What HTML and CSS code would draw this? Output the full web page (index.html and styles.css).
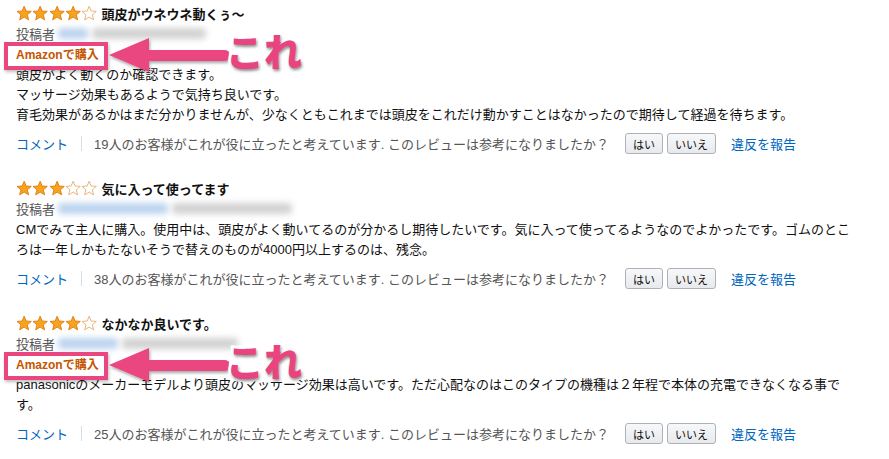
FILE: index.html
```html
<!DOCTYPE html>
<html lang="ja">
<head>
<meta charset="utf-8">
<title>レビュー</title>
<link rel="stylesheet" href="styles.css">
</head>
<body>
<svg class="defs" width="0" height="0" aria-hidden="true">
  <defs>
    <symbol id="star" viewBox="0 0 16 16">
      <path d="M8 1.2 L9.94 5.9 L15 6.3 L11.14 9.6 L12.4 14.6 L8 11.9 L3.6 14.6 L4.86 9.6 L1 6.3 L6.06 5.9 Z"/>
    </symbol>
    <filter id="shadow" x="-20%" y="-40%" width="140%" height="180%">
      <feDropShadow dx="1" dy="2" stdDeviation="1.5" flood-color="#000" flood-opacity="0.35"/>
    </filter>
  </defs>
</svg>

<div class="review">
  <div class="title-row">
    <span class="stars">
      <svg class="star full"><use href="#star"/></svg><svg class="star full"><use href="#star"/></svg><svg class="star full"><use href="#star"/></svg><svg class="star full"><use href="#star"/></svg><svg class="star empty"><use href="#star"/></svg>
    </span>
    <span class="title">頭皮がウネウネ動くぅ〜</span>
  </div>
  <div class="byline">投稿者<span class="blur blue w1"></span><span class="blur gray w2"></span></div>
  <div class="badge-row">
    <span class="badge">Amazonで購入</span>
    <span class="mark-box"></span>
    <svg class="arrow" width="130" height="44" viewBox="0 0 130 44"><g filter="url(#shadow)"><path d="M2 21 L42 4 L42 16 L117 16 Q123 16 123 21.5 Q123 27 117 27 L42 27 L42 38 Z" fill="#ea4781"/></g></svg>
    <span class="kore">これ</span>
  </div>
  <div class="body">頭皮がよく動くのか確認できます。<br>マッサージ効果もあるようで気持ち良いです。<br>育毛効果があるかはまだ分かりませんが、少なくともこれまでは頭皮をこれだけ動かすことはなかったので期待して経過を待ちます。</div>
  <div class="actions">
    <a class="link">コメント</a><span class="sep"></span>
    <span class="helpful">19人のお客様がこれが役に立ったと考えています. このレビューは参考になりましたか？</span>
    <button class="btn">はい</button><button class="btn">いいえ</button>
    <a class="link report">違反を報告</a>
  </div>
</div>

<div class="review">
  <div class="title-row">
    <span class="stars">
      <svg class="star full"><use href="#star"/></svg><svg class="star full"><use href="#star"/></svg><svg class="star full"><use href="#star"/></svg><svg class="star empty"><use href="#star"/></svg><svg class="star empty"><use href="#star"/></svg>
    </span>
    <span class="title">気に入って使ってます</span>
  </div>
  <div class="byline">投稿者<span class="blur blue w3"></span><span class="blur gray w4"></span></div>
  <div class="body">CMでみて主人に購入。使用中は、頭皮がよく動いてるのが分かるし期待したいです。気に入って使ってるようなのでよかったです。ゴムのところは一年しかもたないそうで替えのものが4000円以上するのは、残念。</div>
  <div class="actions">
    <a class="link">コメント</a><span class="sep"></span>
    <span class="helpful">38人のお客様がこれが役に立ったと考えています. このレビューは参考になりましたか？</span>
    <button class="btn">はい</button><button class="btn">いいえ</button>
    <a class="link report">違反を報告</a>
  </div>
</div>

<div class="review">
  <div class="title-row">
    <span class="stars">
      <svg class="star full"><use href="#star"/></svg><svg class="star full"><use href="#star"/></svg><svg class="star full"><use href="#star"/></svg><svg class="star full"><use href="#star"/></svg><svg class="star empty"><use href="#star"/></svg>
    </span>
    <span class="title">なかなか良いです。</span>
  </div>
  <div class="byline">投稿者<span class="blur blue w5"></span><span class="blur gray w6"></span></div>
  <div class="badge-row">
    <span class="badge">Amazonで購入</span>
    <span class="mark-box"></span>
    <svg class="arrow" width="130" height="44" viewBox="0 0 130 44"><g filter="url(#shadow)"><path d="M2 21 L42 4 L42 16 L117 16 Q123 16 123 21.5 Q123 27 117 27 L42 27 L42 38 Z" fill="#ea4781"/></g></svg>
    <span class="kore">これ</span>
  </div>
  <div class="body">panasonicのメーカーモデルより頭皮のマッサージ効果は高いです。ただ心配なのはこのタイプの機種は２年程で本体の充電できなくなる事です。</div>
  <div class="actions">
    <a class="link">コメント</a><span class="sep"></span>
    <span class="helpful">25人のお客様がこれが役に立ったと考えています. このレビューは参考になりましたか？</span>
    <button class="btn">はい</button><button class="btn">いいえ</button>
    <a class="link report">違反を報告</a>
  </div>
</div>
</body>
</html>
```

FILE: styles.css
```css
html, body {
  margin: 0;
  background: #fff;
}
body {
  padding: 3px 0 0 16px;
  font-family: "Liberation Sans", "Noto Sans CJK JP", sans-serif;
  font-size: 13px;
  color: #111;
}
.defs {
  position: absolute;
  width: 0;
  height: 0;
}
.review {
  width: 846px;
  margin-bottom: 24px;
}
.title-row {
  display: flex;
  align-items: center;
  height: 20px;
}
.stars {
  display: flex;
  margin-right: 4px;
}
.star {
  width: 16.3px;
  height: 16.3px;
}
.star.full {
  fill: #f7a41d;
  stroke: #e17b10;
  stroke-width: 0.9;
  stroke-linejoin: round;
}
.star.empty {
  fill: #fff;
  stroke: #e6a55a;
  stroke-width: 0.8;
  stroke-linejoin: round;
}
.title {
  font-weight: bold;
  color: #111;
}
.byline {
  display: flex;
  align-items: center;
  height: 20px;
  color: #555;
}
.blur {
  display: inline-block;
  height: 11px;
  border-radius: 4px;
  filter: blur(3px);
}
.blur.blue { background: #bcd3ef; margin-left: 3px; }
.blur.gray { background: #d2d2d2; margin-left: 4px; }
.w1 { width: 30px; }
.w2 { width: 114px; }
.w3 { width: 110px; }
.w4 { width: 120px; margin-left: 12px; }
.w5 { width: 60px; }
.w6 { width: 116px; margin-left: 2px; }
.badge-row {
  position: relative;
  height: 20px;
  line-height: 20px;
  margin-top: 2px;
}
.badge {
  font-size: 12px;
  font-weight: bold;
  color: #c45500;
}
.mark-box {
  position: absolute;
  left: -12px;
  top: -3px;
  width: 96px;
  height: 20px;
  border: 4px solid #ea4781;
  box-shadow: 1px 2px 3px rgba(0,0,0,0.25);
}
.arrow {
  position: absolute;
  left: 91px;
  top: -11px;
}
.kore {
  position: absolute;
  left: 210px;
  top: -17px;
  font-family: "Noto Sans CJK JP", sans-serif;
  font-size: 38px;
  line-height: 44px;
  font-weight: 900;
  color: #e9447f;
  -webkit-text-stroke: 6px #fff;
  paint-order: stroke fill;
  text-shadow: 1px 2px 3px rgba(0,0,0,0.45);
}
.body {
  line-height: 20px;
  color: #111;
}
.byline + .body {
  margin-top: 2px;
}
.actions {
  display: flex;
  align-items: center;
  height: 21px;
  margin-top: 8px;
  color: #555;
}
.link {
  color: #0066c0;
}
.sep {
  width: 1px;
  height: 15px;
  background: #ddd;
  margin: 0 12px 0 13px;
}
.helpful {
  color: #555;
  margin-right: 16px;
}
.btn {
  height: 21px;
  padding: 0 7px;
  margin-right: 4px;
  font-family: "Liberation Sans", "Noto Sans CJK JP", sans-serif;
  font-size: 11px;
  color: #111;
  background: linear-gradient(#f7f8fa, #e7e9ec);
  border: 1px solid #adb1b8;
  border-radius: 3px;
}
.report {
  margin-left: 11px;
}
```
